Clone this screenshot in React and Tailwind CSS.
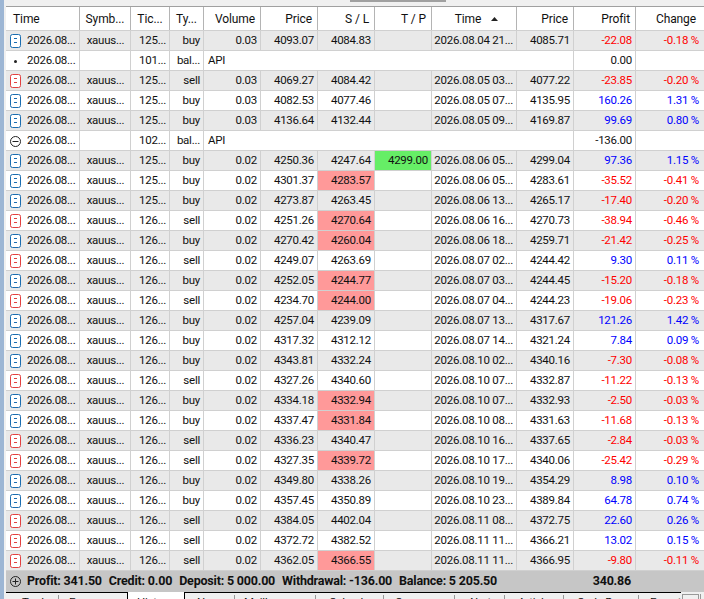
const rows = [
  ["buy", "125...", "0.03", "4093.07", "4084.83", "", "2026.08.04 21...", "4085.71", "-22.08", "-0.18 %"],
  ["dot", "101...", "0.00"],
  ["sell", "125...", "0.03", "4069.27", "4084.42", "", "2026.08.05 03...", "4077.22", "-23.85", "-0.20 %"],
  ["buy", "125...", "0.03", "4082.53", "4077.46", "", "2026.08.05 07...", "4135.95", "160.26", "1.31 %"],
  ["buy", "125...", "0.03", "4136.64", "4132.44", "", "2026.08.05 09...", "4169.87", "99.69", "0.80 %"],
  ["minus", "102...", "-136.00"],
  ["buy", "125...", "0.02", "4250.36", "4247.64", "4299.00", "2026.08.06 05...", "4299.04", "97.36", "1.15 %"],
  ["buy", "125...", "0.02", "4301.37", "4283.57", "", "2026.08.06 05...", "4283.61", "-35.52", "-0.41 %", true],
  ["buy", "125...", "0.02", "4273.87", "4263.45", "", "2026.08.06 13...", "4265.17", "-17.40", "-0.20 %"],
  ["sell", "126...", "0.02", "4251.26", "4270.64", "", "2026.08.06 16...", "4270.73", "-38.94", "-0.46 %", true],
  ["buy", "126...", "0.02", "4270.42", "4260.04", "", "2026.08.06 18...", "4259.71", "-21.42", "-0.25 %", true],
  ["sell", "126...", "0.02", "4249.07", "4263.69", "", "2026.08.07 02...", "4244.42", "9.30", "0.11 %"],
  ["buy", "126...", "0.02", "4252.05", "4244.77", "", "2026.08.07 03...", "4244.45", "-15.20", "-0.18 %", true],
  ["sell", "126...", "0.02", "4234.70", "4244.00", "", "2026.08.07 04...", "4244.23", "-19.06", "-0.23 %", true],
  ["buy", "126...", "0.02", "4257.04", "4239.09", "", "2026.08.07 13...", "4317.67", "121.26", "1.42 %"],
  ["buy", "126...", "0.02", "4317.32", "4312.12", "", "2026.08.07 14...", "4321.24", "7.84", "0.09 %"],
  ["buy", "126...", "0.02", "4343.81", "4332.24", "", "2026.08.10 02...", "4340.16", "-7.30", "-0.08 %"],
  ["sell", "126...", "0.02", "4327.26", "4340.60", "", "2026.08.10 07...", "4332.87", "-11.22", "-0.13 %"],
  ["buy", "126...", "0.02", "4334.18", "4332.94", "", "2026.08.10 07...", "4332.93", "-2.50", "-0.03 %", true],
  ["buy", "126...", "0.02", "4337.47", "4331.84", "", "2026.08.10 08...", "4331.63", "-11.68", "-0.13 %", true],
  ["sell", "126...", "0.02", "4336.23", "4340.47", "", "2026.08.10 16...", "4337.65", "-2.84", "-0.03 %"],
  ["sell", "126...", "0.02", "4327.35", "4339.72", "", "2026.08.10 17...", "4340.06", "-25.42", "-0.29 %", true],
  ["buy", "126...", "0.02", "4349.80", "4338.26", "", "2026.08.10 19...", "4354.29", "8.98", "0.10 %"],
  ["buy", "126...", "0.02", "4357.45", "4350.89", "", "2026.08.10 23...", "4389.84", "64.78", "0.74 %"],
  ["sell", "126...", "0.02", "4384.05", "4402.04", "", "2026.08.11 08...", "4372.75", "22.60", "0.26 %"],
  ["sell", "126...", "0.02", "4372.72", "4382.52", "", "2026.08.11 11...", "4366.21", "13.02", "0.15 %"],
  ["sell", "126...", "0.02", "4362.05", "4366.55", "", "2026.08.11 11...", "4366.95", "-9.80", "-0.11 %", true],
];

const grid = "grid grid-cols-[74px_51px_39px_34px_57px_57px_57px_57px_85px_57px_62px_68px]";
const cell = "h-full border-r border-[#d0d0d0] last:border-r-0 pl-1 pr-[3px] pt-px flex items-center whitespace-nowrap overflow-hidden";
const head = "h-full border-r border-[#b4b4b4] last:border-r-0 pr-[5px] flex items-center whitespace-nowrap text-[12px] tracking-[-0.1px]";

function RowIcon({ kind }) {
  if (kind === "dot") {
    return <span className="w-[11px] shrink-0 flex justify-center"><span className="w-[3px] h-[3px] rounded-full bg-[#222]" /></span>;
  }
  if (kind === "minus") {
    return (
      <svg width="11" height="11" viewBox="0 0 11 11" className="shrink-0">
        <circle cx="5.5" cy="5.5" r="5" fill="none" stroke="#222" strokeWidth="1" />
        <path d="M2.5 5.5h6" stroke="#222" strokeWidth="1" />
      </svg>
    );
  }
  const color = kind === "buy" ? "#1a6db0" : "#e2403f";
  return (
    <svg width="11" height="14" viewBox="0 0 11 14" className="shrink-0">
      <rect x="0.5" y="0.5" width="10" height="13" rx="2" fill="#fff" stroke={color} />
      <path d="M4 4.5h3M4 8.5h3" stroke={color} />
    </svg>
  );
}

function Row({ row, index }) {
  const [kind, ticket] = row;
  const bg = index % 2 === 0 ? "bg-[#e9e9e9]" : "bg-white";
  const base = `${grid} h-5 border-b border-[#d0d0d0] ${bg}`;
  if (kind === "dot" || kind === "minus") {
    return (
      <div className={base}>
        <div className={`${cell} gap-[6px]`}><RowIcon kind={kind} />2026.08...</div>
        <div className={cell} />
        <div className={`${cell} justify-end`}>{ticket}</div>
        <div className={`${cell} justify-end`}>bal...</div>
        <div className={`${cell} col-span-6`}>API</div>
        <div className={`${cell} justify-end`}>{row[2]}</div>
        <div className={cell} />
      </div>
    );
  }
  const [, , volume, price, sl, tp, closeTime, closePrice, profit, change, slHit] = row;
  const money = profit.startsWith("-") ? "text-[#ff0000]" : "text-[#0000ff]";
  return (
    <div className={base}>
      <div className={`${cell} gap-[6px]`}><RowIcon kind={kind} />2026.08...</div>
      <div className={`${cell} justify-center`}>xauus...</div>
      <div className={`${cell} justify-end`}>{ticket}</div>
      <div className={`${cell} justify-end`}>{kind}</div>
      <div className={`${cell} justify-end`}>{volume}</div>
      <div className={`${cell} justify-end`}>{price}</div>
      <div className={`${cell} justify-end ${slHit ? "bg-[#ff9999]" : ""}`}>{sl}</div>
      <div className={`${cell} justify-end ${tp ? "bg-[#66ee66]" : ""}`}>{tp}</div>
      <div className={`${cell} justify-end`}>{closeTime}</div>
      <div className={`${cell} justify-end`}>{closePrice}</div>
      <div className={`${cell} justify-end ${money}`}>{profit}</div>
      <div className={`${cell} justify-end !pr-[5px] ${money}`}>{change}</div>
    </div>
  );
}

const headers = [
  ["Time", "justify-start pl-[7px]"],
  ["Symb...", "justify-center pl-[5px]"],
  ["Tic...", "justify-center pl-[5px]"],
  ["Ty...", "justify-center pl-[5px]"],
  ["Volume", "justify-end"],
  ["Price", "justify-end"],
  ["S / L", "justify-end"],
  ["T / P", "justify-end"],
];

const tabsLeft = [
  ["Trade", "w-[53px] pl-4 border-r"],
  ["Exposure", "w-[68px] pl-[10px]"],
];
const tabsRight = [
  ["News", "w-[50px] pl-3 border-r"],
  ["Mailbox", "w-[81px] pl-[9px] border-r"],
  ["Calendar", "w-[68px] pl-[13px] border-r"],
  ["Company", "w-[71px] pl-[11px] border-r"],
  ["Alerts", "w-[50px] pl-[13px] border-r"],
  ["Articles", "w-[59px] pl-[13px] border-r"],
  ["Code Base", "w-[75px] pl-[13px] border-r"],
  ["Experts", "w-[42px] pl-[11px]"],
];

export default function App() {
  return (
    <div className="w-[704px] h-[599px] overflow-hidden bg-[#f0f0f0] text-[11.5px] tracking-[-0.25px] text-[#111] font-['Roboto',sans-serif] flex">
      <div className="w-1 h-full bg-[#9db6d4]" />
      <div className="w-[700px] flex flex-col">
        <div className="h-[6px] flex items-start justify-end pr-[258px]">
          <div className="w-[96px] h-[2px] bg-[#a0a0a0]" />
        </div>
        <div className="ml-[2px] border-t border-[#a0a0a0] bg-white">
          <div className={`${grid} h-6 border-b border-[#d0d0d0]`}>
            {headers.map(([label, align], i) => (
              <div key={i} className={`${head} ${align}`}>{label}</div>
            ))}
            <div className={`${head} justify-center gap-[10px] pl-[10px]`}>
              Time
              <svg width="7" height="4" viewBox="0 0 7 4"><path d="M3.5 0L7 4H0z" fill="#222" /></svg>
            </div>
            <div className={`${head} justify-end`}>Price</div>
            <div className={`${head} justify-end`}>Profit</div>
            <div className={`${head} justify-end !pr-2`}>Change</div>
          </div>
          {rows.map((row, i) => (
            <Row key={i} row={row} index={i} />
          ))}
          <div className="h-[21px] bg-[#c6c6c6] flex items-center font-bold text-[12.5px] tracking-[-0.2px]">
            <div className="w-[572px] flex items-center gap-[6px] pl-1 shrink-0">
              <svg width="11" height="11" viewBox="0 0 11 11" className="shrink-0">
                <circle cx="5.5" cy="5.5" r="5" fill="none" stroke="#222" />
                <path d="M2.5 5.5h6M5.5 2.5v6" stroke="#222" />
              </svg>
              <span className="flex gap-[7px] whitespace-nowrap">
                <span>Profit: 341.50</span>
                <span>Credit: 0.00</span>
                <span>Deposit: 5 000.00</span>
                <span>Withdrawal: -136.00</span>
                <span>Balance: 5 205.50</span>
              </span>
            </div>
            <div className="w-[53px] text-right">340.86</div>
          </div>
        </div>
        <div className="h-[7px] ml-[2px] flex overflow-hidden whitespace-nowrap text-[#111]">
          <div className="w-[122px] border-t border-r border-black flex leading-[14px] pt-[2px]">
            {tabsLeft.map(([label, cls]) => (
              <span key={label} className={`${cls} border-[#999] h-4`}>{label}</span>
            ))}
          </div>
          <div className="w-[56px] bg-white pl-[9px] pt-[3px] leading-[14px]">History</div>
          <div className="w-[497px] border-t border-l border-black flex leading-[14px] pt-[2px]">
            {tabsRight.map(([label, cls]) => (
              <span key={label} className={`${cls} border-[#999] h-4 overflow-hidden`}>{label}</span>
            ))}
          </div>
          <div className="flex-1 pt-[2px] pl-px flex gap-px">
            <div className="w-[17px] h-4 border border-[#999]" />
            <div className="w-[3px] h-4 border-l border-[#999]" />
          </div>
        </div>
      </div>
    </div>
  );
}
